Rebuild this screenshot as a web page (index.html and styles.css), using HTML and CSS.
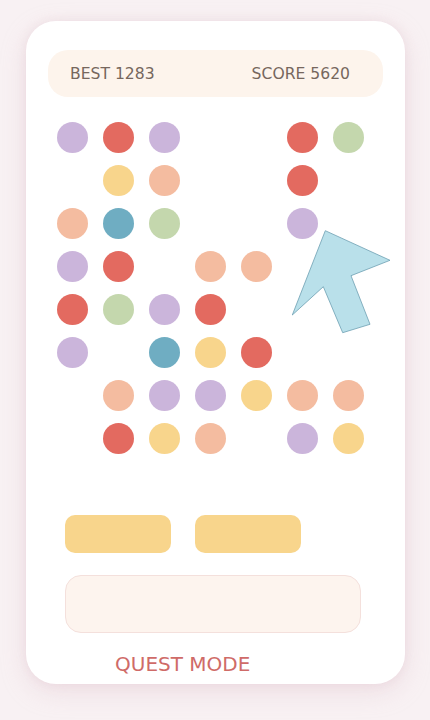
FILE: index.html
```html
<!DOCTYPE html>
<html>
<head>
<meta charset="utf-8">
<link rel="stylesheet" href="styles.css">
</head>
<body>
<div class="card">
  <div class="scorebar">
    <span>BEST 1283</span>
    <span>SCORE 5620</span>
  </div>
  <div class="grid">
    <i class="d p"></i><i class="d r"></i><i class="d p"></i><i></i><i></i><i class="d r"></i><i class="d g"></i>
    <i></i><i class="d y"></i><i class="d o"></i><i></i><i></i><i class="d r"></i><i></i>
    <i class="d o"></i><i class="d b"></i><i class="d g"></i><i></i><i></i><i class="d p"></i><i></i>
    <i class="d p"></i><i class="d r"></i><i></i><i class="d o"></i><i class="d o"></i><i></i><i></i>
    <i class="d r"></i><i class="d g"></i><i class="d p"></i><i class="d r"></i><i></i><i></i><i></i>
    <i class="d p"></i><i></i><i class="d b"></i><i class="d y"></i><i class="d r"></i><i></i><i></i>
    <i></i><i class="d o"></i><i class="d p"></i><i class="d p"></i><i class="d y"></i><i class="d o"></i><i class="d o"></i>
    <i></i><i class="d r"></i><i class="d y"></i><i class="d o"></i><i></i><i class="d p"></i><i class="d y"></i>
  </div>
  <div class="buttons">
    <div class="btn"></div>
    <div class="btn"></div>
  </div>
  <div class="inputbox"></div>
  <div class="mode">QUEST MODE</div>
  <svg class="arrow" width="100" height="104" viewBox="0 0 100 104">
    <polygon points="33.3,0.7 98,30.3 59,45.7 78,94.3 50.7,102.7 31.3,56.7 0.3,85" fill="#b9e0ea" stroke="#6d9fb3" stroke-width="0.8" stroke-linejoin="miter"/>
  </svg>
</div>
</body>
</html>
```
FILE: styles.css
```css
html, body {
  margin: 0;
  padding: 0;
}
body {
  background: #f8f1f3;
  width: 430px;
  height: 720px;
  overflow: hidden;
  font-family: "DejaVu Sans", sans-serif;
}
.card {
  position: relative;
  box-sizing: border-box;
  margin: 21px 0 0 26px;
  width: 379px;
  height: 663px;
  background: #ffffff;
  border-radius: 30px;
  box-shadow: 0 8px 24px rgba(220, 190, 200, 0.35), 0 0 10px rgba(230, 205, 212, 0.4);
  padding: 29px 22px 0 22px;
}
.scorebar {
  height: 47px;
  background: #fdf4ec;
  border-radius: 20px;
  display: flex;
  align-items: center;
  justify-content: space-between;
  padding: 0 33px 0 22px;
  font-size: 15.6px;
  color: #76675d;
}
.grid {
  margin: 25px 0 0 9px;
  display: grid;
  grid-template-columns: repeat(7, 31px);
  grid-auto-rows: 31px;
  column-gap: 15px;
  row-gap: 12px;
}
.grid i {
  display: block;
  width: 31px;
  height: 31px;
}
.d { border-radius: 50%; }
.p { background: #cbb5db; }
.r { background: #e36a60; }
.y { background: #f8d58c; }
.o { background: #f4bca0; }
.b { background: #6fadc2; }
.g { background: #c4d7ad; }
.buttons {
  margin: 61px 0 0 17px;
  display: flex;
  gap: 24px;
}
.btn {
  width: 106px;
  height: 38px;
  border-radius: 10px;
  background: #f8d58c;
}
.inputbox {
  margin: 22px 0 0 17px;
  box-sizing: border-box;
  width: 296px;
  height: 58px;
  border-radius: 16px;
  background: #fdf4ee;
  border: 1px solid #f4e0dc;
}
.mode {
  margin: 19px 0 0 67px;
  font-size: 20px;
  color: #cf6b68;
  line-height: 24px;
}
.arrow {
  position: absolute;
  left: 266px;
  top: 209px;
  overflow: visible;
}
```
